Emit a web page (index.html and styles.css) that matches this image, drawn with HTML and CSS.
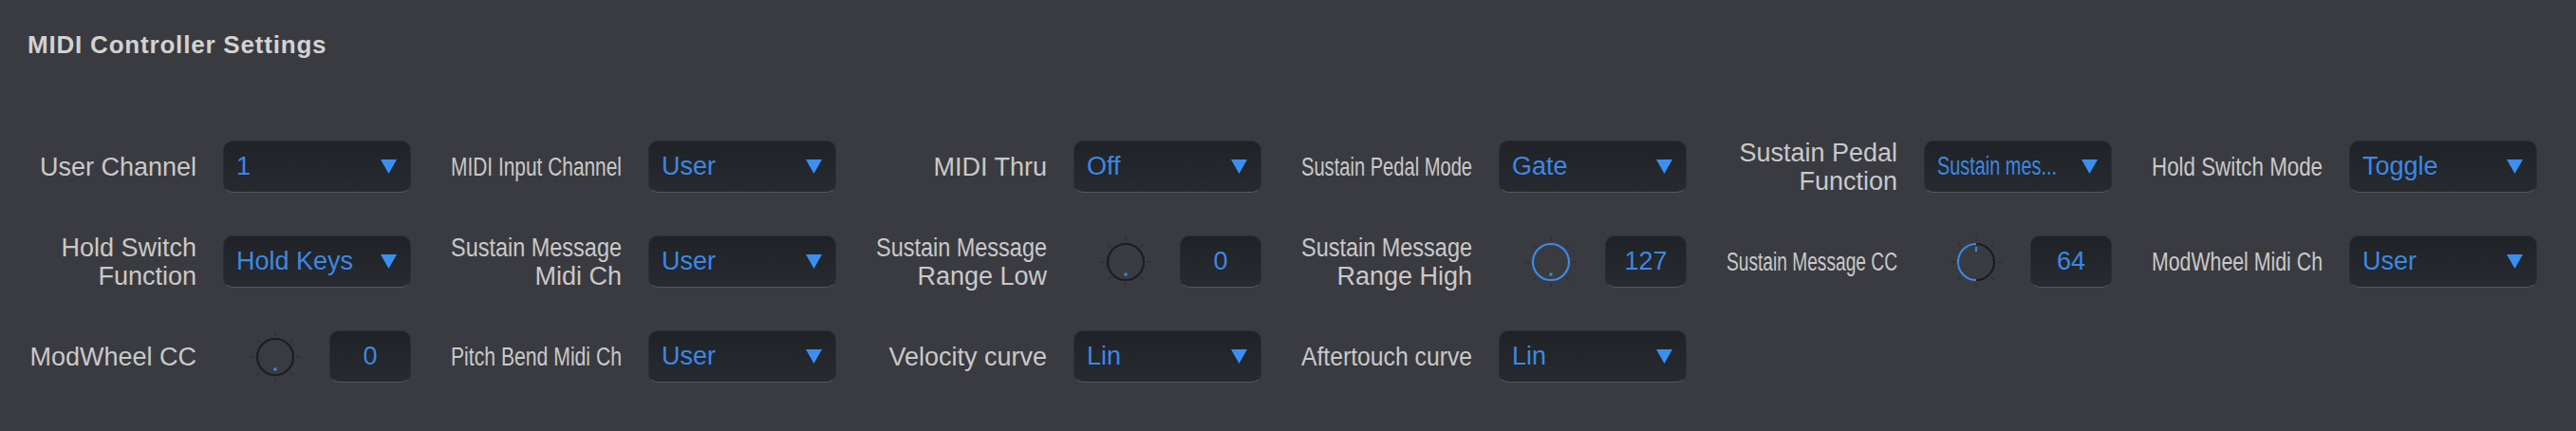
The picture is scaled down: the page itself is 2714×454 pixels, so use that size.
FILE: index.html
```html
<!DOCTYPE html>
<html lang="en">
<head>
<meta charset="utf-8">
<title>MIDI Controller Settings</title>
<link rel="stylesheet" href="styles.css">
</head>
<body>
<div class="panel">
  <h1 class="title">MIDI Controller Settings</h1>
  <div class="grid">
    <!-- Row 1 -->
    <div class="cell">
      <div class="label"><span class="ln"><span class="t" data-fit="180">User Channel</span></span></div>
      <div class="dd"><span class="val"><span class="t" data-fit="126">1</span></span><svg class="arrow" viewBox="0 0 17 15"><polygon points="0,0 17,0 8.5,15"/></svg></div>
    </div>
    <div class="cell">
      <div class="label"><span class="ln"><span class="t" data-fit="180">MIDI Input Channel</span></span></div>
      <div class="dd"><span class="val"><span class="t" data-fit="126">User</span></span><svg class="arrow" viewBox="0 0 17 15"><polygon points="0,0 17,0 8.5,15"/></svg></div>
    </div>
    <div class="cell">
      <div class="label"><span class="ln"><span class="t" data-fit="180">MIDI Thru</span></span></div>
      <div class="dd"><span class="val"><span class="t" data-fit="126">Off</span></span><svg class="arrow" viewBox="0 0 17 15"><polygon points="0,0 17,0 8.5,15"/></svg></div>
    </div>
    <div class="cell">
      <div class="label"><span class="ln"><span class="t" data-fit="180">Sustain Pedal Mode</span></span></div>
      <div class="dd"><span class="val"><span class="t" data-fit="126">Gate</span></span><svg class="arrow" viewBox="0 0 17 15"><polygon points="0,0 17,0 8.5,15"/></svg></div>
    </div>
    <div class="cell">
      <div class="label"><span class="ln"><span class="t" data-fit="180">Sustain Pedal</span></span><span class="ln"><span class="t" data-fit="180">Function</span></span></div>
      <div class="dd"><span class="val"><span class="t" data-fit="126">Sustain mes...</span></span><svg class="arrow" viewBox="0 0 17 15"><polygon points="0,0 17,0 8.5,15"/></svg></div>
    </div>
    <div class="cell">
      <div class="label"><span class="ln"><span class="t" data-fit="180">Hold Switch Mode</span></span></div>
      <div class="dd"><span class="val"><span class="t" data-fit="126">Toggle</span></span><svg class="arrow" viewBox="0 0 17 15"><polygon points="0,0 17,0 8.5,15"/></svg></div>
    </div>

    <!-- Row 2 -->
    <div class="cell">
      <div class="label"><span class="ln"><span class="t" data-fit="180">Hold Switch</span></span><span class="ln"><span class="t" data-fit="180">Function</span></span></div>
      <div class="dd"><span class="val"><span class="t" data-fit="126">Hold Keys</span></span><svg class="arrow" viewBox="0 0 17 15"><polygon points="0,0 17,0 8.5,15"/></svg></div>
    </div>
    <div class="cell">
      <div class="label"><span class="ln"><span class="t" data-fit="180">Sustain Message</span></span><span class="ln"><span class="t" data-fit="180">Midi Ch</span></span></div>
      <div class="dd"><span class="val"><span class="t" data-fit="126">User</span></span><svg class="arrow" viewBox="0 0 17 15"><polygon points="0,0 17,0 8.5,15"/></svg></div>
    </div>
    <div class="cell">
      <div class="label"><span class="ln"><span class="t" data-fit="180">Sustain Message</span></span><span class="ln"><span class="t" data-fit="180">Range Low</span></span></div>
      <div class="knobctl">
        <svg class="knob" viewBox="0 0 56 56">
          <g class="ticks"><line x1="28" y1="1" x2="28" y2="6"/><line x1="28" y1="50" x2="28" y2="55"/><line x1="1" y1="28" x2="6" y2="28"/><line x1="50" y1="28" x2="55" y2="28"/><line x1="9" y1="9" x2="12.5" y2="12.5"/><line x1="47" y1="9" x2="43.5" y2="12.5"/><line x1="9" y1="47" x2="12.5" y2="43.5"/><line x1="47" y1="47" x2="43.5" y2="43.5"/></g>
          <circle class="ring" cx="28" cy="28" r="19"/>
          <rect class="dot" x="26.5" y="39.5" width="3" height="3"/>
        </svg>
        <div class="num">0</div>
      </div>
    </div>
    <div class="cell">
      <div class="label"><span class="ln"><span class="t" data-fit="180">Sustain Message</span></span><span class="ln"><span class="t" data-fit="180">Range High</span></span></div>
      <div class="knobctl">
        <svg class="knob" viewBox="0 0 56 56">
          <g class="ticks"><line x1="28" y1="1" x2="28" y2="6"/><line x1="28" y1="50" x2="28" y2="55"/><line x1="1" y1="28" x2="6" y2="28"/><line x1="50" y1="28" x2="55" y2="28"/><line x1="9" y1="9" x2="12.5" y2="12.5"/><line x1="47" y1="9" x2="43.5" y2="12.5"/><line x1="9" y1="47" x2="12.5" y2="43.5"/><line x1="47" y1="47" x2="43.5" y2="43.5"/></g>
          <circle class="ring on" cx="28" cy="28" r="19"/>
          <rect class="dot" x="26.5" y="39.5" width="3" height="3"/>
        </svg>
        <div class="num">127</div>
      </div>
    </div>
    <div class="cell">
      <div class="label"><span class="ln"><span class="t" data-fit="180">Sustain Message CC</span></span></div>
      <div class="knobctl">
        <svg class="knob" viewBox="0 0 56 56">
          <g class="ticks"><line x1="28" y1="1" x2="28" y2="6"/><line x1="28" y1="50" x2="28" y2="55"/><line x1="1" y1="28" x2="6" y2="28"/><line x1="50" y1="28" x2="55" y2="28"/><line x1="9" y1="9" x2="12.5" y2="12.5"/><line x1="47" y1="9" x2="43.5" y2="12.5"/><line x1="9" y1="47" x2="12.5" y2="43.5"/><line x1="47" y1="47" x2="43.5" y2="43.5"/></g>
          <circle class="ring" cx="28" cy="28" r="19"/>
          <path class="arc" d="M 28 47 A 19 19 0 0 1 28 9"/>
          <rect class="dot" x="27" y="12" width="2" height="5"/>
        </svg>
        <div class="num">64</div>
      </div>
    </div>
    <div class="cell">
      <div class="label"><span class="ln"><span class="t" data-fit="180">ModWheel Midi Ch</span></span></div>
      <div class="dd"><span class="val"><span class="t" data-fit="126">User</span></span><svg class="arrow" viewBox="0 0 17 15"><polygon points="0,0 17,0 8.5,15"/></svg></div>
    </div>

    <!-- Row 3 -->
    <div class="cell">
      <div class="label"><span class="ln"><span class="t" data-fit="180">ModWheel CC</span></span></div>
      <div class="knobctl">
        <svg class="knob" viewBox="0 0 56 56">
          <g class="ticks"><line x1="28" y1="1" x2="28" y2="6"/><line x1="28" y1="50" x2="28" y2="55"/><line x1="1" y1="28" x2="6" y2="28"/><line x1="50" y1="28" x2="55" y2="28"/><line x1="9" y1="9" x2="12.5" y2="12.5"/><line x1="47" y1="9" x2="43.5" y2="12.5"/><line x1="9" y1="47" x2="12.5" y2="43.5"/><line x1="47" y1="47" x2="43.5" y2="43.5"/></g>
          <circle class="ring" cx="28" cy="28" r="19"/>
          <rect class="dot" x="26.5" y="39.5" width="3" height="3"/>
        </svg>
        <div class="num">0</div>
      </div>
    </div>
    <div class="cell">
      <div class="label"><span class="ln"><span class="t" data-fit="180">Pitch Bend Midi Ch</span></span></div>
      <div class="dd"><span class="val"><span class="t" data-fit="126">User</span></span><svg class="arrow" viewBox="0 0 17 15"><polygon points="0,0 17,0 8.5,15"/></svg></div>
    </div>
    <div class="cell">
      <div class="label"><span class="ln"><span class="t" data-fit="180">Velocity curve</span></span></div>
      <div class="dd"><span class="val"><span class="t" data-fit="126">Lin</span></span><svg class="arrow" viewBox="0 0 17 15"><polygon points="0,0 17,0 8.5,15"/></svg></div>
    </div>
    <div class="cell">
      <div class="label"><span class="ln"><span class="t" data-fit="180">Aftertouch curve</span></span></div>
      <div class="dd"><span class="val"><span class="t" data-fit="126">Lin</span></span><svg class="arrow" viewBox="0 0 17 15"><polygon points="0,0 17,0 8.5,15"/></svg></div>
    </div>
  </div>
</div>
<script src="fit.js"></script>
</body>
</html>
```

FILE: styles.css
```css
html, body {
  margin: 0;
  padding: 0;
  background: #3a3b40;
}

body {
  width: 2714px;
  height: 454px;
  overflow: hidden;
  font-family: "Liberation Sans", Arial, sans-serif;
  color: #cbcbcb;
}

.panel {
  padding-top: 32px;
}

.title {
  margin: 0;
  padding-left: 29px;
  font-size: 26px;
  line-height: 30px;
  letter-spacing: 0.8px;
  font-weight: bold;
  color: #d2d2d2;
}

.grid {
  margin-top: 86px;
  padding-left: 27px;
  display: grid;
  grid-template-columns: repeat(6, 406px);
  grid-auto-rows: 55px;
  column-gap: 42px;
  row-gap: 45px;
}

.cell {
  display: flex;
  align-items: center;
  gap: 28px;
}

.label {
  flex: none;
  width: 180px;
  text-align: right;
  font-size: 27px;
  line-height: 30px;
  color: #c9c9c9;
}

.ln {
  display: block;
  white-space: nowrap;
}

.t {
  display: inline-block;
  white-space: nowrap;
  transform-origin: left center;
}

.dd, .num {
  box-sizing: border-box;
  height: 55px;
  border-radius: 10px;
  background: linear-gradient(#1f2226, #272a2f);
  border: 1px solid #2c2e33;
  border-bottom-color: #54575c;
  color: #3c88e4;
  font-size: 27px;
}

.dd {
  flex: none;
  width: 198px;
  display: flex;
  align-items: center;
  padding: 0 14px 0 13px;
}

.val {
  flex: 1;
  min-width: 0;
  white-space: nowrap;
}

.arrow {
  flex: none;
  width: 17px;
  height: 15px;
  fill: #3b8ff0;
}

.knobctl {
  flex: none;
  width: 198px;
  display: flex;
  align-items: center;
}

.knob {
  flex: none;
  width: 56px;
  height: 56px;
  margin-left: 27px;
}

.ticks line {
  stroke: #2e3035;
  stroke-width: 1.2;
}

.ring {
  fill: none;
  stroke: #1b1d21;
  stroke-width: 2.2;
}

.ring.on {
  stroke: #3c8ae6;
}

.arc {
  fill: none;
  stroke: #3c8ae6;
  stroke-width: 2.2;
}

.dot {
  fill: #3c8ae6;
}

.num {
  width: 86px;
  margin-left: auto;
  display: flex;
  align-items: center;
  justify-content: center;
}
```

FILE: fit.js
```js
function fitTexts() {
  document.querySelectorAll('[data-fit]').forEach(function (el) {
    el.style.transform = '';
    var max = parseFloat(el.getAttribute('data-fit'));
    var w = el.getBoundingClientRect().width;
    if (w > max) {
      el.style.transform = 'scaleX(' + (max / w).toFixed(4) + ')';
    }
  });
}
fitTexts();
if (document.fonts && document.fonts.ready) {
  document.fonts.ready.then(fitTexts);
}
```
